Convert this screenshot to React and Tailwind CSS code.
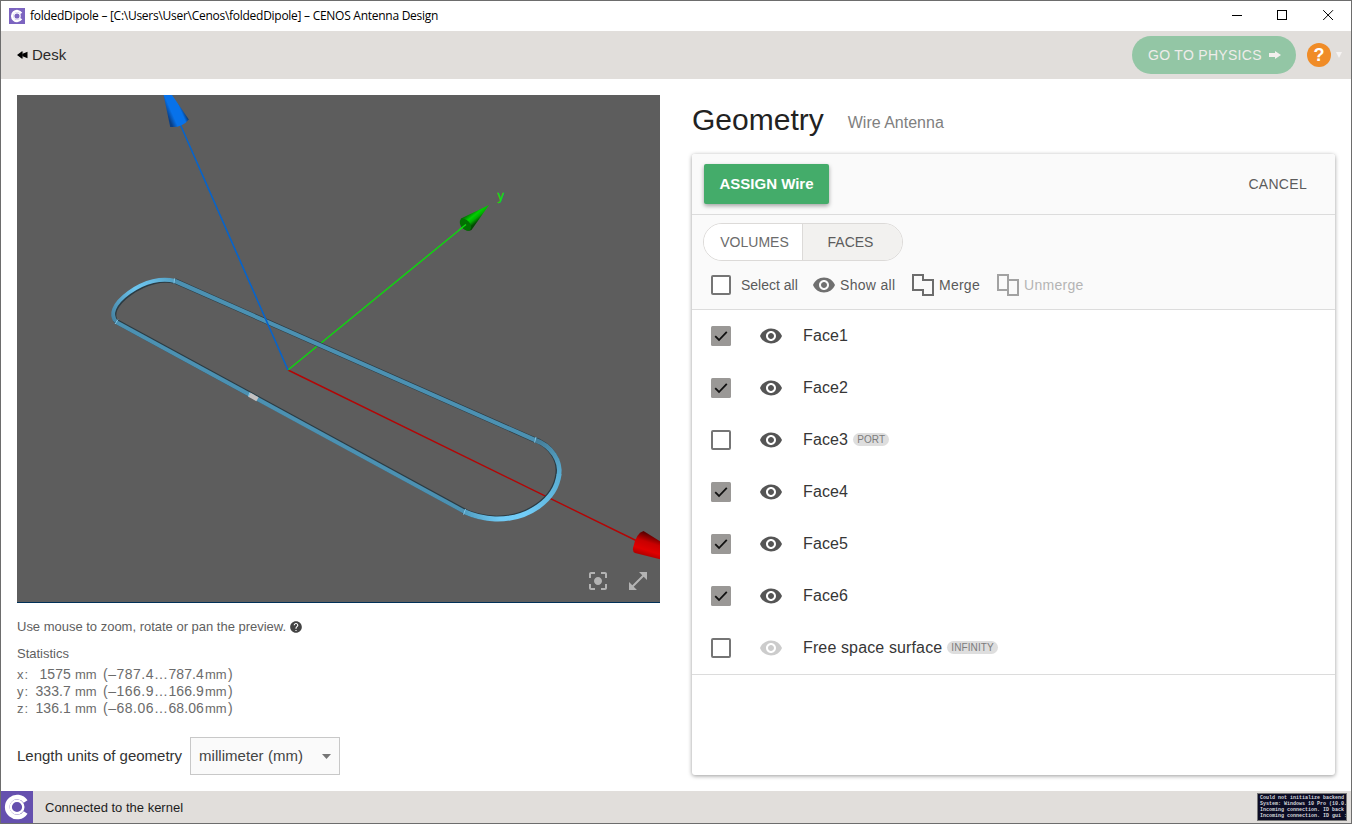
import React from "react";
import { MdVisibility, MdCenterFocusStrong, MdOpenInFull, MdHelp } from "react-icons/md";

const faces = [
  { name: "Face1", checked: true, visible: true },
  { name: "Face2", checked: true, visible: true },
  { name: "Face3", checked: false, visible: true, tag: "PORT" },
  { name: "Face4", checked: true, visible: true },
  { name: "Face5", checked: true, visible: true },
  { name: "Face6", checked: true, visible: true },
  { name: "Free space surface", checked: false, visible: false, tag: "INFINITY" },
];

const stats = [
  { axis: "x:", size: "1575", min: "(–787.4", max: "787.4" },
  { axis: "y:", size: "333.7", min: "(–166.9", max: "166.9" },
  { axis: "z:", size: "136.1", min: "(–68.06", max: "68.06" },
];

function Logo({ className, background = "#6550ae" }) {
  return (
    <svg viewBox="0 0 32 32" className={className}>
      <rect width="32" height="32" fill={background} />
      <path d="M24.600 21.400A10 10 0 1 1 24.600 10.600" fill="none" stroke="#fff" strokeWidth="4.600" />
      <circle cx="16" cy="16" r="6.300" fill="none" stroke="#fff" strokeWidth="2.400" />
    </svg>
  );
}

function TitleBar() {
  return (
    <div className="flex h-[30px] shrink-0 items-center bg-white pl-2">
      <Logo className="size-4" background="#7c64c0" />
      <span className="ml-[5px] font-['Open_Sans',sans-serif] text-[12px] tracking-[-0.27px] whitespace-nowrap text-black">
        foldedDipole – [C:\Users\User\Cenos\foldedDipole] – CENOS Antenna Design
      </span>
      <div className="-mr-px ml-auto flex">
        <svg viewBox="0 0 46 30" className="h-[30px] w-[46px]" shapeRendering="crispEdges">
          <path d="M18 14.500H28" stroke="#000" />
        </svg>
        <svg viewBox="0 0 46 30" className="h-[30px] w-[46px]" shapeRendering="crispEdges">
          <path d="M17.500 9.500H26.500V18.500H17.500Z" fill="none" stroke="#000" />
        </svg>
        <svg viewBox="0 0 46 30" className="h-[30px] w-[46px]">
          <path d="M17.200 9.200L27 19M27 9.200L17.200 19" stroke="#000" />
        </svg>
      </div>
    </div>
  );
}

function Toolbar() {
  return (
    <div className="flex h-12 shrink-0 items-center bg-[#e1dedb] pl-4">
      <svg viewBox="0 0 11 8" className="h-2 w-[11px]">
        <path d="M0 4L5 .3V3L10.5 .8V7.2L5 5V7.7Z" fill="#000" />
        <path d="M5.6 .4V7.6" stroke="#222" strokeWidth=".8" />
      </svg>
      <span className="ml-1 text-[15px] text-[#2a2a2a]">Desk</span>
      <button className="ml-auto flex h-[38px] w-[164px] items-center rounded-full bg-[#93c6a5] pl-4 text-[14px] tracking-[0.3px] whitespace-nowrap text-[#eeecea]">
        GO TO PHYSICS
        <svg viewBox="0 0 12 8" className="ml-[7px] h-2 w-3">
          <path d="M0 2H6V0L12 4L6 8V6H0Z" fill="#f3f0ee" />
        </svg>
      </button>
      <div className="ml-[11px] flex size-6 items-center justify-center rounded-full bg-[#f08c27] text-[18px] font-bold text-white">?</div>
      <svg viewBox="0 0 6 6" className="mr-[9px] ml-[5px] size-1.5">
        <path d="M0 0H6L3 6Z" fill="#f6f4f3" />
      </svg>
    </div>
  );
}

function Preview() {
  return (
    <div className="relative h-[508px] w-[643px] border-b border-[#003058] bg-[#5d5d5d]">
      <svg viewBox="17 95 643 507" className="block h-[507px] w-[643px]">
        <defs>
          <linearGradient id="blueCone" x1="166" y1="112" x2="182" y2="105" gradientUnits="userSpaceOnUse">
            <stop offset="0" stopColor="#0a3f86" />
            <stop offset=".3" stopColor="#0772ea" />
            <stop offset=".8" stopColor="#0772ea" />
            <stop offset="1" stopColor="#0c3a74" />
          </linearGradient>
          <linearGradient id="greenCone" x1="469" y1="212" x2="477" y2="222" gradientUnits="userSpaceOnUse">
            <stop offset="0" stopColor="#036003" />
            <stop offset=".45" stopColor="#00d000" />
            <stop offset=".7" stopColor="#00b000" />
            <stop offset="1" stopColor="#034a03" />
          </linearGradient>
          <linearGradient id="redCone" x1="652" y1="535" x2="645" y2="557" gradientUnits="userSpaceOnUse">
            <stop offset="0" stopColor="#5c0000" />
            <stop offset=".35" stopColor="#c80000" />
            <stop offset=".7" stopColor="#e00000" />
            <stop offset="1" stopColor="#a80000" />
          </linearGradient>
          <linearGradient id="bendUpper" x1="540" y1="440" x2="559" y2="476" gradientUnits="userSpaceOnUse">
            <stop offset="0" stopColor="#457f9b" />
            <stop offset="1" stopColor="#5aaed4" />
          </linearGradient>
          <linearGradient id="bendLower" x1="559" y1="476" x2="465" y2="511" gradientUnits="userSpaceOnUse">
            <stop offset="0" stopColor="#5aaed4" />
            <stop offset=".45" stopColor="#72cdf8" />
            <stop offset=".7" stopColor="#70caf5" />
            <stop offset="1" stopColor="#529fc2" />
          </linearGradient>
          <linearGradient id="leftBend" x1="112" y1="322" x2="175" y2="281" gradientUnits="userSpaceOnUse">
            <stop offset="0" stopColor="#4480a0" />
            <stop offset=".5" stopColor="#6cc6f0" />
            <stop offset=".75" stopColor="#66bae2" />
            <stop offset="1" stopColor="#529fc2" />
          </linearGradient>
        </defs>
        <path d="M288 370L636 540.500" stroke="#b40505" strokeWidth="1.400" />
        <path d="M288 370L466 224.500" stroke="#0fd60f" strokeWidth="1.500" />
        <g fill="none" stroke="#2b3b43">
          <path d="M175 281L535 440" strokeWidth="5.200" />
          <path d="M116.300 321.500L465 511.200" strokeWidth="5.200" />
          <path d="M116 321.500C110 315 113 304 129 292.500C145 281 162 277.500 175 281" strokeWidth="4.400" transform="translate(.9 .9)" />
          <path d="M535 440C552 446 561 461 559 475C556 500 528 520 495 519C484 518.500 474 516 464.500 511.700" strokeWidth="5.400" transform="translate(-1 -.7)" />
        </g>
        <g fill="none">
          <path d="M175 281L535 440" stroke="#4c91b2" strokeWidth="4.100" />
          <path d="M116 322L464.500 511.700" stroke="#4c91b2" strokeWidth="4.100" />
          <path d="M116 321.500C110 315 113 304 129 292.500C145 281 162 277.500 175 281" stroke="url(#leftBend)" strokeWidth="3.900" />
          <path d="M535 440C552 446 561 461 559 475" stroke="url(#bendUpper)" strokeWidth="4.600" />
          <path d="M559.100 474C556 500 528 520 495 519C484 518.500 474 516 464.500 511.700" stroke="url(#bendLower)" strokeWidth="5" />
          <path d="M536 437L534.500 442.500M465.500 509L463.500 514.500M174.500 278.500L174 283.500M118 319.500L115 324" stroke="#83c9ea" />
          <path d="M249.500 394.800L257.500 399.200" stroke="#c4c1c1" strokeWidth="4.600" />
          <path d="M249.800 392.500L248.500 396.500" stroke="#8accea" />
        </g>
        <path d="M288 370L180.500 125" stroke="#0664cc" strokeWidth="1.600" />
        <path d="M160 77.500L170.200 127Q182 128 188.800 119.500Z" fill="url(#blueCone)" />
        <path d="M489 205L461 218.500Q459 224 464 228.500Q468 232 471.500 230Z" fill="url(#greenCone)" />
        <ellipse cx="465.500" cy="224.800" rx="7" ry="4.500" transform="rotate(48 465.500 224.800)" fill="#027002" />
        <path d="M459 230L466 224.500" stroke="#0fd60f" strokeWidth="1.400" />
        <path d="M643.500 531Q636 533 633 548Q632.500 552 635 553L690 566.500V560Z" fill="url(#redCone)" />
        <text x="497.600" y="200" fill="#10e010" stroke="#10e010" strokeWidth=".3" fontSize="13" fontFamily="Liberation Sans, sans-serif">y</text>
      </svg>
      <div className="absolute right-2.5 bottom-[9px] flex gap-4 text-[#b3b3b3]">
        <MdCenterFocusStrong size={24} />
        <MdOpenInFull size={24} />
      </div>
    </div>
  );
}

function LeftColumn() {
  return (
    <div className="flex w-[643px] flex-col">
      <Preview />
      <div className="mt-4 flex h-4 items-center text-[13px] tracking-[-0.01px] whitespace-nowrap text-[#5f5f5f]">
        Use mouse to zoom, rotate or pan the preview.
        <MdHelp size={14} className="ml-[3px] text-[#444]" />
      </div>
      <div className="mt-[11px] text-[13px] leading-4 text-[#5f5f5f]">Statistics</div>
      <div className="mt-1 text-[14px] leading-[17px] text-[#6b6b6b]">
        {stats.map((s) => (
          <div key={s.axis} className="flex whitespace-nowrap">
            <span className="w-[15px] text-[13px] tracking-[1px]">{s.axis}</span>
            <span className="w-[39px] text-right tracking-[0.1px]">{s.size}</span>
            <span className="ml-1 w-6 text-[13px]">mm</span>
            <span className="w-[55px] text-right tracking-[0.5px]">{s.min}</span>
            <span className="w-[14px] text-center">…</span>
            <span className="w-9 text-right tracking-[0.1px]">{s.max}</span>
            <span className="ml-px w-[23px] text-[13px]">mm</span>
            <span>)</span>
          </div>
        ))}
      </div>
      <div className="mt-5 flex items-center text-[15px] text-[#333]">
        <span className="w-[173px] whitespace-nowrap">Length units of geometry</span>
        <div className="flex h-[38px] w-[150px] items-center border border-[#c8c8c8] bg-[#fafafa] pr-2 pl-2 tracking-[0.05px] text-[#444]">
          <span>millimeter (mm)</span>
          <svg viewBox="0 0 9 5" className="ml-auto h-[5px] w-[9px]">
            <path d="M0 0H9L4.500 5Z" fill="#767676" />
          </svg>
        </div>
      </div>
    </div>
  );
}

function Checkbox({ checked }) {
  return (
    <svg viewBox="0 0 20 20" className="size-5 shrink-0">
      {checked ? (
        <>
          <rect width="20" height="20" rx="1.500" fill="#9a9896" />
          <path d="M4.200 10.200L8 14L15.800 5.800" fill="none" stroke="#111" strokeWidth="1.800" />
        </>
      ) : (
        <rect x="1" y="1" width="18" height="18" rx="1" fill="#fff" stroke="#757575" strokeWidth="2" />
      )}
    </svg>
  );
}

function FaceRow({ face }) {
  return (
    <div className="flex h-[52px] items-center pl-[19px]">
      <Checkbox checked={face.checked} />
      {face.visible ? (
        <MdVisibility size={24} className="ml-7 text-[#555]" />
      ) : (
        <MdVisibility size={24} className="ml-7 text-[#ccc]" />
      )}
      <span className="ml-5 text-[16px] tracking-[0.13px] text-[#363636]">{face.name}</span>
      {face.tag && (
        <span className="mb-px ml-[5px] flex h-[13px] items-center rounded-full bg-[#dedede] px-1 text-[10px] tracking-[0.1px] text-[#7c7c7c]">
          {face.tag}
        </span>
      )}
    </div>
  );
}

function GeometryPanel() {
  return (
    <div className="flex w-[643px] flex-col">
      <div className="flex h-[59px] pt-[6px]">
        <h1 className="text-[30px] leading-[38px] text-[#222]">Geometry</h1>
        <span className="ml-6 pt-2.5 text-[16px] leading-6 text-[#808080]">Wire Antenna</span>
      </div>
      <div className="h-[621px] overflow-hidden rounded-[3px] bg-white shadow-[0_1px_4px_rgba(0,0,0,0.4)]">
        <div className="flex h-[61px] items-center justify-between border-b border-[#dcdcdc] bg-[#fafafa] pr-7 pl-3">
          <button className="h-10 w-[125px] rounded-[2px] bg-[#44ac6a] text-[15px] font-bold whitespace-nowrap text-white shadow-[0_2px_4px_rgba(0,0,0,0.35)]">
            ASSIGN Wire
          </button>
          <button className="text-[14px] tracking-[0.3px] text-[#5c5c5c]">CANCEL</button>
        </div>
        <div className="h-[95px] border-b border-[#dcdcdc] bg-[#fafafa] pt-2 pl-[11px]">
          <div className="flex h-[38px] w-[200px] overflow-hidden rounded-full border border-[#dcdad8] text-[14px] text-[#6b6b6b]">
            <button className="w-[99px] border-r border-[#dcdad8] bg-white pl-[3px]">VOLUMES</button>
            <button className="w-[99px] bg-[#f2f1ef] pr-1 text-[#5c5c5c]">FACES</button>
          </div>
          <div className="mt-3 flex h-6 items-center pl-2 text-[14px] text-[#5a5a5a]">
            <Checkbox checked={false} />
            <span className="ml-2.5 w-[71px]">Select all</span>
            <MdVisibility size={24} className="text-[#707070]" />
            <span className="ml-1 w-[72px] tracking-[0.3px]">Show all</span>
            <svg viewBox="0 0 22 22" className="size-[22px]">
              <path d="M1 1H11V6H21V21H11V16H1Z" fill="none" stroke="#6c6c6c" strokeWidth="2" />
            </svg>
            <span className="ml-[5px] w-[58px] tracking-[0.25px]">Merge</span>
            <svg viewBox="0 0 22 22" className="size-[22px]">
              <path d="M11 6V1H1V16H11" fill="none" stroke="#a2a2a2" strokeWidth="2" />
              <path d="M11 6H21V21H11Z" fill="none" stroke="#a2a2a2" strokeWidth="2" />
            </svg>
            <span className="ml-[5px] tracking-[0.3px] text-[#b4b4b4]">Unmerge</span>
          </div>
        </div>
        <div className="border-b border-[#dcdcdc]">
          {faces.map((face) => (
            <FaceRow key={face.name} face={face} />
          ))}
        </div>
      </div>
    </div>
  );
}

function StatusBar() {
  return (
    <div className="flex h-8 shrink-0 items-center bg-[#e1dedb]">
      <Logo className="size-8" />
      <span className="ml-3 pt-0.5 text-[13px] text-[#1d1d1d]">Connected to the kernel</span>
      <div className="mr-1 ml-auto h-7 w-[90px] overflow-hidden border border-[#777] bg-[#0c0c24] pt-px pl-0.5 font-['Liberation_Mono',monospace] text-[5px] leading-[6px] font-bold whitespace-pre text-[#d6d6dc]">
        <div>Could not initialize backend</div>
        <div>System: Windows 10 Pro (10.0.</div>
        <div>Incoming connection. ID back</div>
        <div>Incoming connection. ID gui :</div>
      </div>
    </div>
  );
}

export default function App() {
  return (
    <div className="flex h-[824px] w-[1352px] flex-col overflow-hidden border border-[#6d6d6d] bg-white font-['Liberation_Sans',sans-serif]">
      <TitleBar />
      <Toolbar />
      <main className="flex h-[712px] shrink-0 gap-8 pt-4 pl-4">
        <LeftColumn />
        <GeometryPanel />
      </main>
      <StatusBar />
    </div>
  );
}
